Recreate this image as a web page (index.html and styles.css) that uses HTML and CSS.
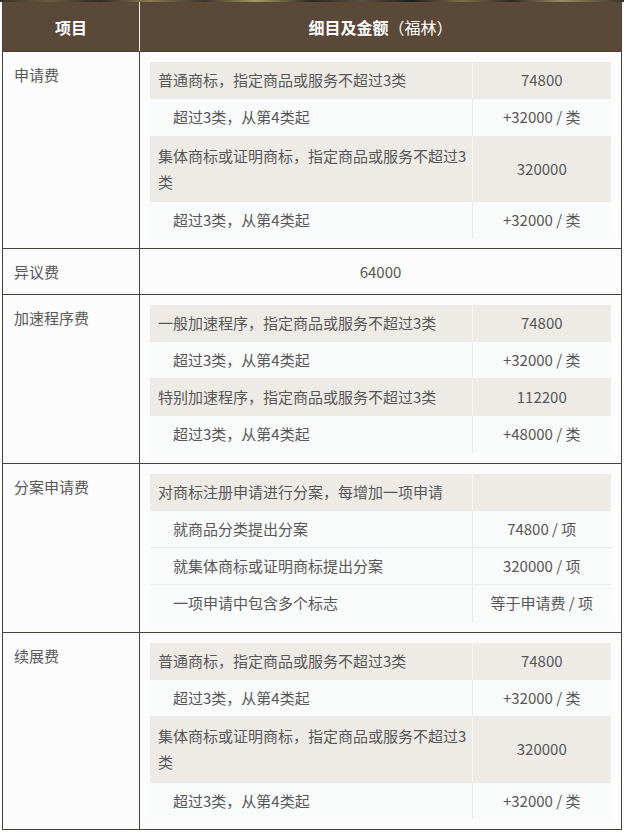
FILE: index.html
```html
<!DOCTYPE html>
<html lang="zh-CN">
<head>
<meta charset="utf-8">
<title>商标费用</title>
<link rel="stylesheet" href="styles.css">
</head>
<body>
<div class="topstrip"></div>
<table class="fees">
  <thead>
    <tr>
      <th class="item">项目</th>
      <th class="detail-h"><strong>细目及金额</strong>（福林）</th>
    </tr>
  </thead>
  <tbody>
    <tr>
      <td class="item">申请费</td>
      <td class="detail">
        <table class="sub">
          <tr class="main"><td class="desc">普通商标，指定商品或服务不超过3类</td><td class="amt">74800</td></tr>
          <tr><td class="desc ind">超过3类，从第4类起</td><td class="amt">+32000 / 类</td></tr>
          <tr class="main wrap"><td class="desc">集体商标或证明商标，指定商品或服务不超过3类</td><td class="amt">320000</td></tr>
          <tr class="last"><td class="desc ind">超过3类，从第4类起</td><td class="amt">+32000 / 类</td></tr>
        </table>
      </td>
    </tr>
    <tr>
      <td class="item">异议费</td>
      <td class="single">64000</td>
    </tr>
    <tr>
      <td class="item">加速程序费</td>
      <td class="detail">
        <table class="sub">
          <tr class="main"><td class="desc">一般加速程序，指定商品或服务不超过3类</td><td class="amt">74800</td></tr>
          <tr><td class="desc ind">超过3类，从第4类起</td><td class="amt">+32000 / 类</td></tr>
          <tr class="main"><td class="desc">特别加速程序，指定商品或服务不超过3类</td><td class="amt">112200</td></tr>
          <tr class="last"><td class="desc ind">超过3类，从第4类起</td><td class="amt">+48000 / 类</td></tr>
        </table>
      </td>
    </tr>
    <tr>
      <td class="item">分案申请费</td>
      <td class="detail">
        <table class="sub">
          <tr class="main"><td class="desc">对商标注册申请进行分案，每增加一项申请</td><td class="amt"></td></tr>
          <tr><td class="desc ind">就商品分类提出分案</td><td class="amt">74800 / 项</td></tr>
          <tr><td class="desc ind">就集体商标或证明商标提出分案</td><td class="amt">320000 / 项</td></tr>
          <tr class="last"><td class="desc ind">一项申请中包含多个标志</td><td class="amt">等于申请费 / 项</td></tr>
        </table>
      </td>
    </tr>
    <tr>
      <td class="item">续展费</td>
      <td class="detail">
        <table class="sub">
          <tr class="main"><td class="desc">普通商标，指定商品或服务不超过3类</td><td class="amt">74800</td></tr>
          <tr><td class="desc ind">超过3类，从第4类起</td><td class="amt">+32000 / 类</td></tr>
          <tr class="main wrap"><td class="desc">集体商标或证明商标，指定商品或服务不超过3类</td><td class="amt">320000</td></tr>
          <tr class="last"><td class="desc ind">超过3类，从第4类起</td><td class="amt">+32000 / 类</td></tr>
        </table>
      </td>
    </tr>
  </tbody>
</table>
</body>
</html>
```
FILE: styles.css
```css
html, body {
  margin: 0;
  padding: 0;
  background: #ffffff;
}

body {
  font-family: "Noto Sans CJK SC", "Noto Sans", sans-serif;
  font-size: 15px;
  color: #575757;
}

.topstrip {
  height: 2px;
  background: linear-gradient(90deg, #3a3128 0%, #6b5a3e 8%, #2e2a24 16%, #8a7a4e 24%, #3b342b 33%, #a89a6a 41%, #2b2823 50%, #5c5040 58%, #1f1d1a 66%, #7d6e4c 74%, #2d2923 82%, #9b8d63 90%, #3a3128 100%);
}

.fees {
  margin-left: 2px;
  width: 620px;
  table-layout: fixed;
  border-collapse: separate;
  border-spacing: 0;
  border-left: 1px solid #4b4038;
  border-right: 1px solid #4b4038;
  border-bottom: 1px solid #4b4038;
}

.fees th {
  height: 49px;
  padding: 0;
  background: #5a4839;
  color: #ffffff;
  font-size: 16px;
  font-weight: normal;
  text-align: center;
  vertical-align: middle;
  box-sizing: border-box;
}

.fees th strong {
  font-weight: bold;
}

.fees th.item {
  width: 137px;
  font-weight: bold;
  border-right: 1px solid #f4f1ee;
}

.fees > tbody > tr > td {
  border-top: 1px solid #4b4038;
  background: #fcfcfc;
  line-height: 26.25px;
  vertical-align: top;
}

.fees td.item {
  padding: 10px 11px 8px;
  border-right: 1px solid #4b4038;
}

.fees td.single {
  padding: 10px 10px 8px;
  text-align: center;
}

.fees td.detail {
  padding: 10px;
}

.sub {
  width: 461px;
  table-layout: fixed;
  border-collapse: collapse;
}

.sub td {
  padding: 5px 2px 5px 8px;
  line-height: 26.25px;
  background: #f9fafa;
  border-bottom: 1px solid #ebebeb;
  vertical-align: middle;
}

.sub td.desc {
  width: 322px;
  box-sizing: border-box;
}

.sub td.ind {
  text-indent: 15px;
}

.sub td.amt {
  padding: 5px 4px;
  text-align: center;
  border-left: 1px solid #ebebeb;
}

.sub tr.main td {
  background: #eeebe7;
  border-bottom-color: #eeebe7;
}

.sub tr.main td.amt {
  border-left-color: #f8f7f5;
}

.sub tr.wrap td {
  padding-top: 6px;
  padding-bottom: 6px;
}

.sub tr.last td {
  border-bottom: 0;
}
```
